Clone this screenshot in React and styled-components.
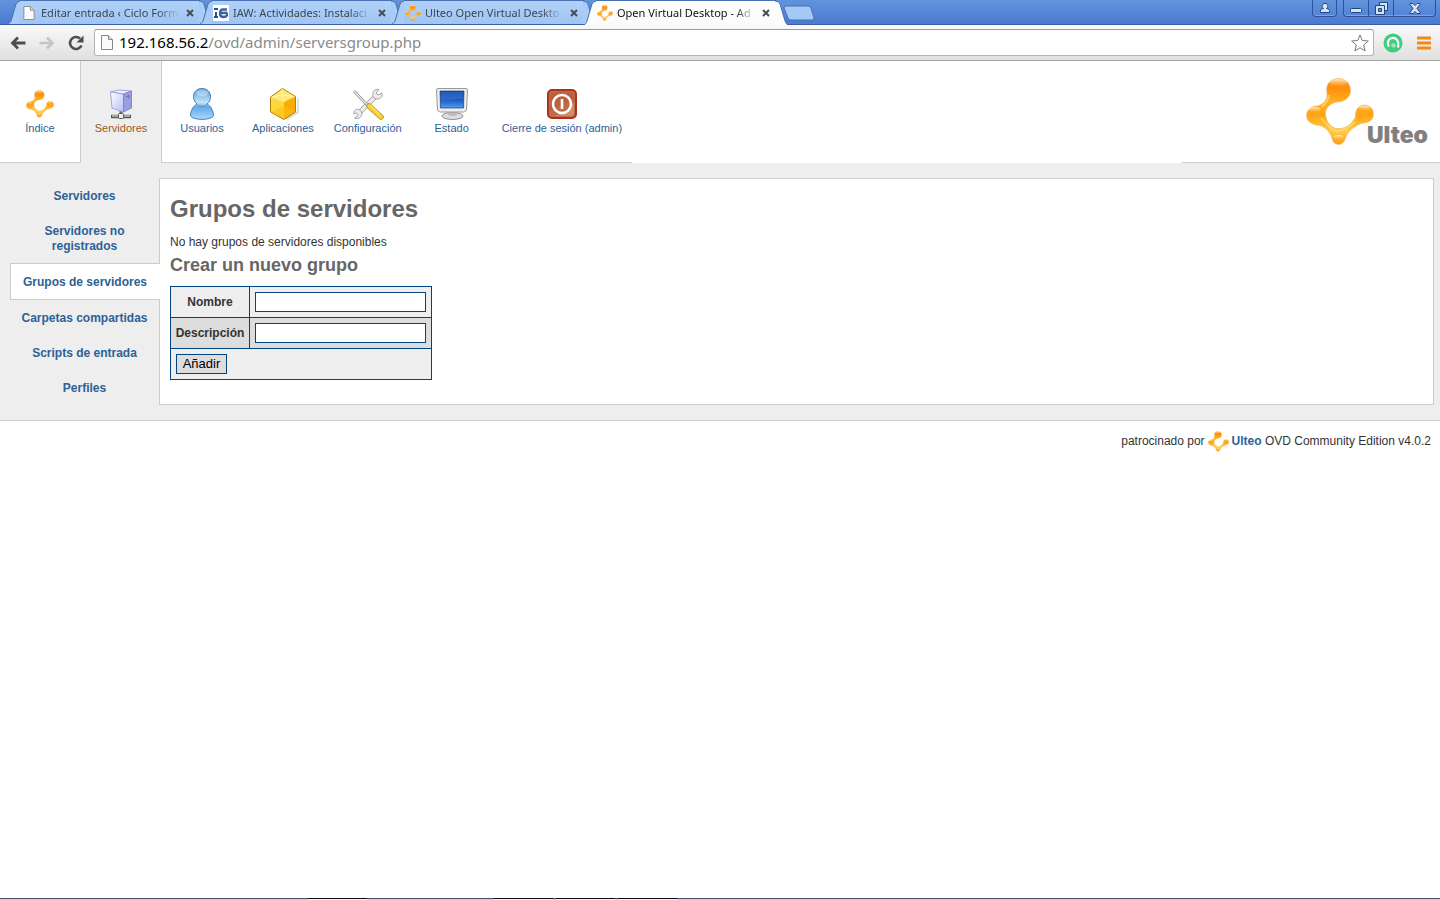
import React from "react";
import styled, { createGlobalStyle, css } from "styled-components";

const Global = createGlobalStyle`
  *, *::before, *::after { box-sizing: border-box; }
  body { margin: 0; background: #fff; color: #333; font: 12px/15px "Liberation Sans", Arial, sans-serif; }
  a { color: #2b6297; text-decoration: none; }
  button { font: inherit; padding: 0; border: 0; background: none; }
  svg { display: block; flex: none; }
`;

const Page = styled.div`
  min-height: 100vh;
  display: flex;
  flex-direction: column;
`;

/* ---------- browser frame ---------- */

const TabStrip = styled.div`
  display: flex;
  height: 25px;
  padding-left: 8px;
  background: linear-gradient(#6293dd, #4a79cf);
  box-shadow: inset 0 -1px #3a5ea5;
  font: 11px/24px "Noto Sans", sans-serif;
`;

const TabBox = styled.div`
  display: flex;
  width: 204px;
  height: ${(p) => (p.$active ? 25 : 24)}px;
  margin-right: -12px;
  position: relative;
  z-index: ${(p) => (p.$active ? 2 : 1)};
  color: ${(p) => (p.$active ? "#111" : "#3c4650")};
`;

const TabFace = styled.div`
  flex: 1;
  min-width: 0;
  display: flex;
  align-items: center;
  gap: 4px;
  margin: 0 -1px;
  padding-left: 1px;
  border-top: 1px solid #4871b5;
  background: ${(p) => (p.$active ? "linear-gradient(#fff, #fafafa)" : "linear-gradient(#b1d1f9, #9fc5f4)")};
`;

const TabTitle = styled.span`
  flex: 1;
  min-width: 0;
  white-space: nowrap;
  mask-image: linear-gradient(to right, #000 84%, transparent);
`;

const CloseButton = styled.button`
  padding: 0 6px 0 2px;
`;

const NewTab = styled.button`
  align-self: center;
  margin-left: 7px;
`;

const WindowControls = styled.div`
  display: flex;
  gap: 6px;
  height: 17px;
  margin-left: auto;
  padding-right: 4px;
`;

const ControlGroup = styled.div`
  display: flex;
  border: 1px solid #2c539a;
  border-top: 0;
  border-radius: 0 0 4px 4px;
  box-shadow: inset 0 -1px #7da5e6;
`;

const Control = styled.button`
  display: flex;
  align-items: center;
  justify-content: center;
  width: ${(p) => p.$width}px;
  & + & { border-left: 1px solid #2c539a; }
`;

const Toolbar = styled.div`
  display: flex;
  align-items: center;
  height: 36px;
  padding-left: 6px;
  background: linear-gradient(#fafafa, #dfdfdf);
  border-bottom: 1px solid #a3a3a3;
`;

const ToolButton = styled.button`
  display: flex;
  align-items: center;
  justify-content: center;
  width: ${(p) => p.$width}px;
  height: 28px;
`;

const AddressBar = styled.div`
  flex: 1;
  display: flex;
  align-items: center;
  gap: 6px;
  height: 27px;
  margin: 0 4px 0 6px;
  padding: 0 4px 0 6px;
  background: #fff;
  border: 1px solid #b4b4b4;
  border-top-color: #999;
  border-radius: 3px;
  font: 15px/25px "Noto Sans", sans-serif;
  color: #8a8a8a;
  white-space: nowrap;
`;

const Address = styled.span`
  flex: 1;
  b { color: #000; font-weight: 400; }
`;

/* ---------- admin console ---------- */

const Header = styled.header`
  display: flex;
  height: 102px;
`;

const Nav = styled.nav`
  display: flex;
`;

const NavLink = styled.a`
  display: flex;
  flex-direction: column;
  align-items: center;
  justify-content: center;
  gap: 1px;
  min-width: 80px;
  padding: 0 10px;
  border-bottom: 1px solid #ccc;
  font-size: 11px;
  line-height: 15px;
  white-space: nowrap;
  ${(p) => p.$active && css`
    min-width: 82px;
    background: #eee;
    border: 1px solid #ccc;
    border-width: 0 1px;
    color: #985b26;
  `}
`;

const Brand = styled.div`
  display: flex;
  justify-content: flex-end;
  align-items: center;
  width: 258px;
  margin-left: auto;
  padding-right: 12px;
  border-bottom: 1px solid #ccc;
`;

const Main = styled.main`
  display: flex;
  align-items: flex-start;
  padding: 15px 6px 15px 10px;
  background: #eee;
  border-bottom: 1px solid #ccc;
`;

const SideMenu = styled.nav`
  flex: none;
  display: flex;
  flex-direction: column;
  width: 150px;
  margin-right: -1px;
  position: relative;
  z-index: 1;
`;

const SideLink = styled.a`
  padding: 11px 11px 9px 10px;
  font-weight: bold;
  text-align: center;
  ${(p) => p.$active && css`
    background: #fff;
    border: 1px solid #ccc;
    border-right: 0;
  `}
`;

const Panel = styled.section`
  flex: 1;
  padding: 16px 10px 24px;
  background: #fff;
  border: 1px solid #ccc;
`;

const Title = styled.h1`
  margin: 0 0 12px;
  font-size: 24px;
  line-height: 28px;
  color: #666;
`;

const Text = styled.p`
  margin: 0;
`;

const Subtitle = styled.h2`
  margin: 4px 0 10px;
  font-size: 18px;
  line-height: 22px;
  color: #666;
`;

const FormTable = styled.table`
  border-collapse: collapse;
  border: 1px solid #004581;
`;

const Row = styled.tr`
  height: 31px;
  background: ${(p) => (p.$dark ? "#ddd" : "#eee")};
`;

const HeadCell = styled.th`
  width: 79px;
  padding: 0;
  border: 1px solid #004581;
`;

const Cell = styled.td`
  padding: 5px;
  border: 1px solid #004581;
`;

const Field = styled.input`
  display: block;
  width: 171px;
  height: 20px;
  padding: 1px 2px;
  background: #fff;
  border: 1px solid #004581;
  font: inherit;
`;

const SubmitButton = styled.button`
  display: block;
  width: 51px;
  height: 20px;
  background: #ddd;
  border: 1px solid #004581;
  font-size: 13px;
  line-height: 18px;
  color: #000;
`;

const Footer = styled.footer`
  display: flex;
  align-items: center;
  justify-content: flex-end;
  gap: 3px;
  padding: 10px 9px;
  a { font-weight: bold; }
`;

const DesktopEdge = styled.div`
  display: flex;
  height: 2px;
  margin-top: auto;
  padding-left: 308px;
  background: #c3d0de;
  border-top: 1px solid #425267;
`;

const EdgeWindow = styled.div`
  width: 59px;
  height: 2px;
  margin: -1px ${(p) => p.$after}px 0 0;
  background: #f3f3f8;
  border-top: 1px solid #0b0b18;
`;

/* ---------- drawings ---------- */

function UlteoMark({ size }) {
  const id = "mark" + size;
  return (
    <svg width={size} height={size} viewBox="0 0 68 68" aria-hidden="true">
      <defs>
        <linearGradient id={id} x1="0" y1="0" x2="0" y2="1">
          <stop offset="0" stopColor="#ff9a1c" />
          <stop offset=".15" stopColor="#ff8f0c" />
          <stop offset=".35" stopColor="#ffaf22" />
          <stop offset=".55" stopColor="#ffa414" />
          <stop offset=".8" stopColor="#ffcb45" />
          <stop offset="1" stopColor="#ff9b0e" />
        </linearGradient>
        <linearGradient id={id + "s"} x1="0" y1="0" x2="0" y2="1">
          <stop offset="0" stopColor="#fff" stopOpacity=".8" />
          <stop offset="1" stopColor="#ffc55a" stopOpacity=".1" />
        </linearGradient>
      </defs>
      <path
        fill={`url(#${id})`}
        stroke="#f3b566"
        strokeWidth=".6"
        d="M21 15C19 6 25 .5 32.500 .5S44.500 6 44.500 12.500 39 24 31.500 24C25 25 19 29 19.500 36.500 20 43 24 49.500 31 50.500 39 51.500 46 46 49.500 39 49 31 53 27 58.500 27S67.500 31 67.500 36 64 44.500 58 45C51 46 43 52 40 58.500 39 63.500 36 66.500 32.500 66.500S26 63.500 25.500 58.500C23 53 18 47.500 11 47 5 46.500 .5 42.500 .5 37.500S5 28 11 28C17 27 22 21 21 15Z"
      />
      <ellipse cx="32.500" cy="4.500" rx="9" ry="3.500" fill={`url(#${id}s)`} />
      <ellipse cx="9" cy="31.500" rx="6" ry="2.500" fill={`url(#${id}s)`} />
      <ellipse cx="58.500" cy="30" rx="6" ry="2.500" fill={`url(#${id}s)`} />
      <path d="M23 17c-1 6-4 9-7 12M15 40c5 5 8 11 16 13 7 0 11-4 18-9" fill="none" stroke="#ffdf78" strokeWidth="2" opacity=".7" />
      <ellipse cx="32.500" cy="59" rx="5" ry="2" fill={`url(#${id}s)`} />
    </svg>
  );
}

function UlteoLogo() {
  return (
    <LogoRow>
      <UlteoMark size={68} />
      <LogoText>Ulteo</LogoText>
    </LogoRow>
  );
}

const LogoRow = styled.div`
  display: flex;
  align-items: flex-end;
`;

const LogoText = styled.span`
  margin-left: -7px;
  font: 900 23px/22px "Inter", sans-serif;
  color: #808080;
`;

const PageIcon = ({ w, h }) => (
  <svg width={w} height={h} viewBox="0 0 12 15" aria-hidden="true">
    <path d="M.5.500h7l4 4v10H.500Z" fill="#fafafa" stroke="#888" />
    <path d="M7.500.500v4h4" fill="#ddd" stroke="#888" />
  </svg>
);

const CourseIcon = () => (
  <svg width="16" height="16" viewBox="0 0 16 16" aria-hidden="true">
    <path fill="#fff" d="M0 0h16v16H0z" />
    <path d="M1 4h4M3 7v5M1 12h4" stroke="#2d5187" strokeWidth="2" />
    <path d="M14 4.500H9.500Q7 5 7 8.500T10.500 12 14 9.500 11 8H8" fill="none" stroke="#3c66a3" strokeWidth="2.400" />
  </svg>
);

const ServerIcon = () => (
  <svg width="32" height="32" viewBox="0 0 32 32" aria-hidden="true">
    <defs>
      <linearGradient id="srv" x1="0" y1="0" x2="1" y2="1">
        <stop offset="0" stopColor="#fff" /><stop offset="1" stopColor="#b9bdf8" />
      </linearGradient>
    </defs>
    <path d="M16 21v6" stroke="#666" strokeWidth="3" />
    <path d="M6 28.500h20" stroke="#555" strokeWidth="3.500" />
    <path d="M7 28h18" stroke="#ddd" strokeWidth="1.200" />
    <rect x="13.500" y="25.500" width="5" height="5" rx="1" fill="#eee" stroke="#555" />
    <path d="m5.500 4 8-2 13 1-8 3Z" fill="#eef0ff" stroke="#a3a5d8" />
    <path d="m5.500 4 13 2V24L7 20Z" fill="url(#srv)" stroke="#a3a5e0" />
    <path d="m18.500 6 8-3v17l-8 4Z" fill="#9a9ee0" stroke="#8487c6" />
    <path d="m21 9 3-1.500v3" fill="none" stroke="#5d60a8" />
  </svg>
);

const UserIcon = () => (
  <svg width="32" height="32" viewBox="0 0 32 32" aria-hidden="true">
    <defs>
      <linearGradient id="usr" x1="0" y1="0" x2="0" y2="1">
        <stop offset="0" stopColor="#5299dc" /><stop offset=".45" stopColor="#c2e3fb" />
        <stop offset=".6" stopColor="#66a9e6" /><stop offset="1" stopColor="#a5daff" />
      </linearGradient>
    </defs>
    <path d="M16 .500c5 0 8.500 3.500 8.500 8 0 3-1 5.500-3.500 7.500 4 2 6.500 7 6.500 12-3 4.500-20 4.500-23 0 0-5 2.500-10 6.500-12-2.500-2-3.500-4.500-3.500-7.500 0-4.500 3.500-8 8.500-8Z" fill="url(#usr)" stroke="#477fb8" />
    <ellipse cx="16" cy="5" rx="6" ry="3.500" fill="#fff" opacity=".35" />
    <path d="M11 17c3 2 7 2 10 0" fill="none" stroke="#4d91cf" />
  </svg>
);

const BoxIcon = () => (
  <svg width="32" height="32" viewBox="0 0 32 32" aria-hidden="true">
    <path d="m18 30 12-7V9l2 2v14l-11 7Z" fill="#ccc" opacity=".6" />
    <path d="m15 .500 13 8-13 7-12-6Z" fill="#ffe875" />
    <path d="M3 9.500 17 14v17.500L4 24Z" fill="#ffd83d" />
    <path d="m17 14 11.500-5.500V24L17 31.500Z" fill="#f8ac0b" />
    <path d="M3 9.500 15 7l13 1.500M15 .500V7l2 7" fill="none" stroke="#fff8b0" />
    <path d="m4 24 13-6 11 6-11 7.500Z" fill="#ffbd13" opacity=".6" />
    <path d="m15.500.500 13 8V24L17 31.500 3.500 24V9Z" fill="none" stroke="#b27d09" />
  </svg>
);

const ToolsIcon = () => (
  <svg width="32" height="32" viewBox="0 0 32 32" aria-hidden="true">
    <path d="m6 26 17-17" stroke="#a5a5a5" strokeWidth="5" />
    <path d="m6 26 17-17" stroke="#efefef" strokeWidth="3.200" />
    <path d="M27 1.500c-4-1-7 2-6 6 0 4 6 5 9 1V5l-4 2-2-2Z" fill="#ececec" stroke="#a5a5a5" />
    <path d="M2 26c-1-4 3-6 6-4 4 3 1 9-3 8.500L2.500 30 6 27.500 4.500 25Z" fill="#ececec" stroke="#a5a5a5" />
    <path d="m2 3 14 15" stroke="#888" strokeWidth="2.600" />
    <path d="m2 3 14 15" stroke="#f2f2f2" strokeWidth="1.200" />
    <path d="m17 18 12 11" stroke="#b99112" strokeWidth="5.500" strokeLinecap="round" />
    <path d="m17 18 12 11" stroke="#f8d33d" strokeWidth="3.800" strokeLinecap="round" />
    <path d="m18 17 10 9.500" stroke="#fff19c" strokeWidth="1" />
  </svg>
);

const MonitorIcon = () => (
  <svg width="32" height="32" viewBox="0 0 32 32" aria-hidden="true">
    <defs>
      <linearGradient id="scr" x1="0" y1="0" x2="0" y2="1">
        <stop offset="0" stopColor="#1849a5" /><stop offset=".45" stopColor="#2260c5" />
        <stop offset=".5" stopColor="#1b57bd" /><stop offset="1" stopColor="#4f9df2" />
      </linearGradient>
    </defs>
    <ellipse cx="16.500" cy="28" rx="10.500" ry="3.500" fill="#dedede" stroke="#929292" />
    <path d="M12 23h9v4q-4 2-9 0Z" fill="#bbb" />
    <path d="M2 .500h28q1.500 0 1.500 1.500l-1 20q-1 2-3 2h-23q-2 0-3-2L.500 2Q.500.500 2 .500Z" fill="#eee" stroke="#999" />
    <path d="M4 3h24l-.5 17h-23Z" fill="url(#scr)" stroke="#153d83" strokeWidth=".7" />
    <path d="M5 4h22v6Q17 12 5 14Z" fill="#4d8add" opacity=".25" />
  </svg>
);

const PowerIcon = () => (
  <svg width="32" height="32" viewBox="0 0 32 32" aria-hidden="true">
    <rect x="2" y="2" width="28" height="28" rx="4" fill="#c06c4a" stroke="#a8341c" strokeWidth="2" />
    <path d="M4 8q0-4 4-4h16q4 0 4 4v5Q14 14 4 24Z" fill="#b5542f" opacity=".5" />
    <path d="M28 14v11q0 3-3 3H8Q22 25 28 14Z" fill="#e3ab8e" opacity=".5" />
    <circle cx="16" cy="16" r="9" fill="none" stroke="#fff" strokeWidth="2.600" />
    <path d="M16 11v10" stroke="#fff" strokeWidth="2.600" />
  </svg>
);

/* ---------- content ---------- */

const tabs = [
  { title: "Editar entrada ‹ Ciclo Form", icon: <PageIcon w={12} h={14} /> },
  { title: "IAW: Actividades: Instalaci", icon: <CourseIcon /> },
  { title: "Ulteo Open Virtual Deskto", icon: <UlteoMark size={16} /> },
  { title: "Open Virtual Desktop - Ad", icon: <UlteoMark size={16} />, active: true },
];

const navItems = [
  { label: "Índice", icon: <UlteoMark size={28} /> },
  { label: "Servidores", icon: <ServerIcon />, active: true },
  { label: "Usuarios", icon: <UserIcon /> },
  { label: "Aplicaciones", icon: <BoxIcon /> },
  { label: "Configuración", icon: <ToolsIcon /> },
  { label: "Estado", icon: <MonitorIcon /> },
  { label: "Cierre de sesión (admin)", icon: <PowerIcon /> },
];

const IconSlot = styled.span`
  display: flex;
  align-items: center;
  justify-content: center;
  height: 32px;
`;

const Favicon = styled.span`
  flex: none;
  display: flex;
  justify-content: center;
  width: 16px;
`;

const sideItems = [
  "Servidores",
  "Servidores no registrados",
  "Grupos de servidores",
  "Carpetas compartidas",
  "Scripts de entrada",
  "Perfiles",
];

function Tab({ title, icon, active }) {
  const fill = active ? "#fcfcfc" : "#a9ccf7";
  const h = active ? 25 : 24;
  return (
    <TabBox $active={active}>
      <svg width="13" height={h} viewBox={`0 0 13 ${h}`} aria-hidden="true">
        <path d={`M0 ${h}Q2 ${h - 1} 3 21L8 4Q9 1 13 1V${h}Z`} fill={fill} />
        <path d={`M0 ${h}Q2 ${h - 1} 3 21L8 4Q9 1 13 1`} fill="none" stroke="#4871b5" />
      </svg>
      <TabFace $active={active}>
        <Favicon>{icon}</Favicon>
        <TabTitle>{title}</TabTitle>
        <CloseButton aria-label="Cerrar pestaña">
          <svg width="8" height="8" viewBox="0 0 8 8">
            <path d="m1 1 6 6M7 1 1 7" stroke="#444e58" strokeWidth="2" />
          </svg>
        </CloseButton>
      </TabFace>
      <svg width="13" height={h} viewBox={`0 0 13 ${h}`} aria-hidden="true">
        <path d={`M13 ${h}Q11 ${h - 1} 10 21L5 4Q4 1 0 1V${h}Z`} fill={fill} />
        <path d={`M13 ${h}Q11 ${h - 1} 10 21L5 4Q4 1 0 1`} fill="none" stroke="#4871b5" />
      </svg>
    </TabBox>
  );
}

const glyph = { fill: "#d4e2fa", stroke: "#24467f" };

function BrowserFrame() {
  return (
    <>
      <TabStrip>
        {tabs.map((t) => <Tab key={t.title} {...t} />)}
        <NewTab aria-label="Nueva pestaña">
          <svg width="32" height="16" viewBox="0 0 32 16">
            <path d="M3 1h22q2 0 3 2l3 10q0 2-2 2H8q-2 0-3-2L1 3q0-2 2-2Z" fill="#a5c9f7" stroke="#4871b5" />
          </svg>
        </NewTab>
        <WindowControls>
          <ControlGroup>
            <Control $width={23} aria-label="Usuario">
              <svg width="12" height="12" viewBox="0 0 12 12">
                <path d="M1.500 10.500q-1-3.500 3-4a2.800 2.800 0 1 1 3 0q4 .5 3 4Z" {...glyph} />
              </svg>
            </Control>
          </ControlGroup>
          <ControlGroup>
            <Control $width={24} aria-label="Minimizar">
              <svg width="12" height="12" viewBox="0 0 12 12"><rect x=".5" y="6.500" width="11" height="4" rx="1" {...glyph} /></svg>
            </Control>
            <Control $width={25} aria-label="Restaurar">
              <svg width="13" height="13" viewBox="0 0 13 13">
                <path d="M4.500.500h8v8h-8Z" {...glyph} />
                <path d="M.500 3.500h9v9h-9Z" {...glyph} />
                <path d="M3.500 6.500h3v3h-3Z" fill="#5f8cd8" stroke="#24467f" />
              </svg>
            </Control>
            <Control $width={42} aria-label="Cerrar">
              <svg width="12" height="11" viewBox="0 0 12 11">
                <path d="M1 .500h3l2 2 2-2h3v1l-3 4 3 4v1H8l-2-2-2 2H1v-1l3-4-3-4Z" {...glyph} />
              </svg>
            </Control>
          </ControlGroup>
        </WindowControls>
      </TabStrip>
      <Toolbar>
        <ToolButton $width={23} aria-label="Atrás">
          <svg width="16" height="14" viewBox="0 0 16 14"><path d="M15.500 7H3M8 1.500 2.500 7 8 12.500" fill="none" stroke="#4d4d4d" strokeWidth="2.800" /></svg>
        </ToolButton>
        <ToolButton $width={35} aria-label="Adelante">
          <svg width="16" height="14" viewBox="0 0 16 14"><path d="M.5 7H13M8 1.500 13.500 7 8 12.500" fill="none" stroke="#c4c4c4" strokeWidth="2.600" /></svg>
        </ToolButton>
        <ToolButton $width={24} aria-label="Recargar">
          <svg width="16" height="16" viewBox="0 0 16 16">
            <path d="M13.500 10.500A6 6 0 1 1 12 3.500" fill="none" stroke="#4d4d4d" strokeWidth="2.600" />
            <path d="M15.500.500v7h-7Z" fill="#4d4d4d" />
          </svg>
        </ToolButton>
        <AddressBar>
          <PageIcon w={12} h={15} />
          <Address><b>192.168.56.2</b>/ovd/admin/serversgroup.php</Address>
          <ToolButton $width={18} aria-label="Marcador">
            <svg width="18" height="18" viewBox="0 0 18 18">
              <path d="m9 1 2.300 5.500 6 .5-4.600 4 1.400 6L9 13.800 3.900 17l1.400-6-4.600-4 6-.5Z" fill="#fff" stroke="#777" />
            </svg>
          </ToolButton>
        </AddressBar>
        <ToolButton $width={30} aria-label="Extensión">
          <svg width="20" height="20" viewBox="0 0 20 20">
            <circle cx="10" cy="10" r="9.500" fill="#40ce7e" />
            <path d="M6 13.500A5.200 5.200 0 1 1 15.200 10v4.500" fill="none" stroke="#fff" strokeWidth="2.200" />
            <path d="M12.500 14.500H10a2.200 2.200 0 1 1 2.500-2.500Z" fill="#fff" opacity=".5" />
          </svg>
        </ToolButton>
        <ToolButton $width={32} aria-label="Menú">
          <svg width="14" height="14" viewBox="0 0 14 14"><path d="M0 2h14M0 7h14M0 12h14" stroke="#ef8a17" strokeWidth="3" /></svg>
        </ToolButton>
      </Toolbar>
    </>
  );
}

export default function App() {
  return (
    <Page>
      <Global />
      <BrowserFrame />
      <Header>
        <Nav>
          {navItems.map((n) => (
            <NavLink key={n.label} href="#" $active={n.active}>
              <IconSlot>{n.icon}</IconSlot>
              {n.label}
            </NavLink>
          ))}
        </Nav>
        <Brand><UlteoLogo /></Brand>
      </Header>
      <Main>
        <SideMenu>
          {sideItems.map((s) => (
            <SideLink key={s} href="#" $active={s === "Grupos de servidores"}>{s}</SideLink>
          ))}
        </SideMenu>
        <Panel>
          <Title>Grupos de servidores</Title>
          <Text>No hay grupos de servidores disponibles</Text>
          <Subtitle>Crear un nuevo grupo</Subtitle>
          <form onSubmit={(e) => e.preventDefault()}>
            <FormTable>
              <tbody>
                <Row>
                  <HeadCell scope="row"><label htmlFor="name">Nombre</label></HeadCell>
                  <Cell><Field id="name" type="text" /></Cell>
                </Row>
                <Row $dark>
                  <HeadCell scope="row"><label htmlFor="description">Descripción</label></HeadCell>
                  <Cell><Field id="description" type="text" /></Cell>
                </Row>
                <Row>
                  <Cell colSpan={2}><SubmitButton type="submit">Añadir</SubmitButton></Cell>
                </Row>
              </tbody>
            </FormTable>
          </form>
        </Panel>
      </Main>
      <Footer>
        <span>patrocinado por</span>
        <UlteoMark size={21} />
        <span><a href="#">Ulteo</a> OVD Community Edition v4.0.2</span>
      </Footer>
      <DesktopEdge>
        <EdgeWindow $after={127} />
        <EdgeWindow $after={3} />
        <EdgeWindow $after={3} />
        <EdgeWindow $after={0} />
      </DesktopEdge>
    </Page>
  );
}
